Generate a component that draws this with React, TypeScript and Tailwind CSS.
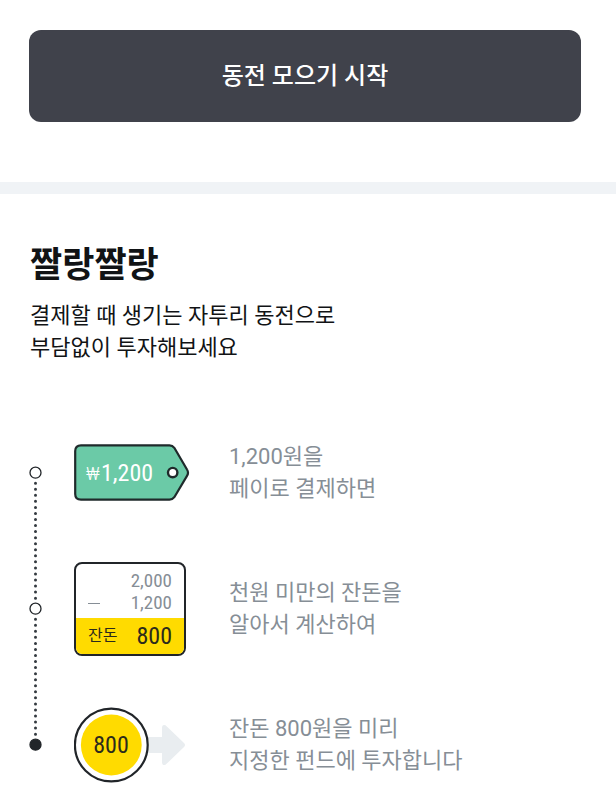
import type { ReactNode } from 'react'

interface Step {
  art: ReactNode
  lines: string[]
}

function PriceTag() {
  return (
    <svg width="116" height="58" viewBox="0 0 116 58">
      <path
        d="M7 1.3H95.5Q98.5 1.3 100.3 3.8L113 25.5Q115 28.7 113 31.9L100.3 53.2Q98.5 55.7 95.5 55.7H7Q1.2 55.7 1.2 50V7Q1.2 1.3 7 1.3Z"
        fill="#6bcaa7"
        stroke="#1f2a2b"
        strokeWidth="2.2"
        strokeLinejoin="round"
      />
      <circle cx="98.7" cy="28.6" r="4.7" fill="#fff" stroke="#1f2a2b" strokeWidth="2.4" />
      <text x="12" y="36" fill="#fff" className="font-[Roboto,sans-serif] text-[18px] font-light">
        ₩
      </text>
      <text x="27" y="37" fill="#fff" className="font-['Roboto_Condensed','Noto_Sans_CJK_KR',sans-serif] text-[24px]">
        1,200
      </text>
    </svg>
  )
}

function ChangeCard() {
  return (
    <div className="w-28 overflow-hidden rounded-lg border-2 border-[#212529] bg-white font-['Roboto_Condensed','Noto_Sans_CJK_KR',sans-serif]">
      <div className="px-3 pt-1.5 pb-1 text-right text-[19px] leading-[22px] text-[#868e96]">
        <div>2,000</div>
        <div className="flex items-center justify-between">
          <span className="h-px w-3 bg-[#868e96]" />
          <span>1,200</span>
        </div>
      </div>
      <div className="flex h-9 items-center justify-between bg-[#ffdb00] px-3 text-[#2b2a1c]">
        <span className="text-[16px]">잔돈</span>
        <span className="text-[24px]">800</span>
      </div>
    </div>
  )
}

function Coin() {
  return (
    <svg width="112" height="76" viewBox="0 0 112 76">
      <path
        d="M72 30H88V21Q88 17 91.5 18.2L110 36Q112 38 110 40L91.5 57.8Q88 59 88 55V46H72Z"
        fill="#e9edf0"
      />
      <circle cx="37.3" cy="38" r="36.4" fill="#fff" stroke="#212529" strokeWidth="2.2" />
      <circle cx="37.3" cy="38" r="30.4" fill="#ffdb00" />
      <text
        x="37"
        y="46"
        textAnchor="middle"
        fill="#2b2a1c"
        className="font-['Roboto_Condensed','Noto_Sans_CJK_KR',sans-serif] text-[24px]"
      >
        800
      </text>
    </svg>
  )
}

function Marker({ last }: { last: boolean }) {
  return (
    <svg width="13" height="136" viewBox="0 0 13 136" className="overflow-visible">
      <circle
        cx="6.5"
        cy="67.7"
        r="5.5"
        fill={last ? '#212529' : '#fff'}
        stroke="#212529"
        strokeWidth="1.3"
      />
      {!last && (
        <line
          x1="6.5"
          y1="78.2"
          x2="6.5"
          y2="194"
          stroke="#343a40"
          strokeWidth="3"
          strokeLinecap="round"
          strokeDasharray="0 6.05"
        />
      )}
    </svg>
  )
}

const STEPS: Step[] = [
  { art: <PriceTag />, lines: ['1,200원을', '페이로 결제하면'] },
  { art: <ChangeCard />, lines: ['천원 미만의 잔돈을', '알아서 계산하여'] },
  { art: <Coin />, lines: ['잔돈 800원을 미리', '지정한 펀드에 투자합니다'] },
]

export default function App() {
  return (
    <main className="bg-white font-[Roboto,'Noto_Sans_CJK_KR',sans-serif] text-[#111315]">
      <div className="pt-[30px] pr-[35px] pb-[60px] pl-[29px]">
        <button
          type="button"
          className="flex h-[92px] w-full items-center justify-center rounded-xl bg-[#40424b] text-[24px] font-medium text-white"
        >
          동전 모으기 시작
        </button>
      </div>

      <div className="h-3 bg-[#f0f3f6]" />

      <section className="px-[30px] pt-12">
        <h1 className="text-[35px] leading-[48px] font-bold">짤랑짤랑</h1>
        <p className="mt-[10px] text-[22px] leading-8">
          결제할 때 생기는 자투리 동전으로
          <br />
          부담없이 투자해보세요
        </p>
      </section>

      <ol className="mt-[41px] pl-[29px]">
        {STEPS.map((step, i) => (
          <li key={step.lines[0]} className="flex h-[136px] items-center">
            <Marker last={i === STEPS.length - 1} />
            <div className="ml-8 w-[155px] shrink-0">{step.art}</div>
            <p className="text-[22px] leading-8 text-[#868e96]">
              {step.lines[0]}
              <br />
              {step.lines[1]}
            </p>
          </li>
        ))}
      </ol>
    </main>
  )
}
